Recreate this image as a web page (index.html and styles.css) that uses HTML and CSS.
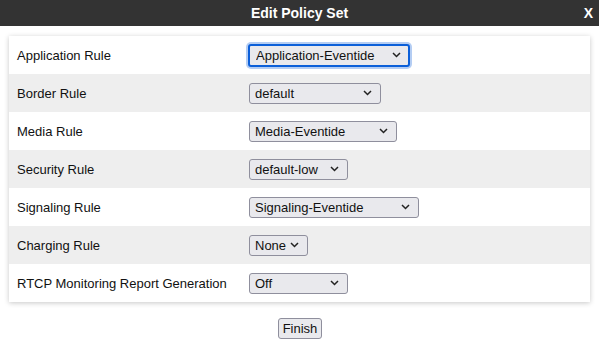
FILE: index.html
```html
<!DOCTYPE html>
<html>
<head>
<meta charset="utf-8">
<link rel="stylesheet" href="styles.css">
</head>
<body>
<div class="titlebar">
  <span class="title">Edit Policy Set</span>
  <span class="close">X</span>
</div>
<div class="card">
  <div class="row">
    <span class="label">Application Rule</span>
    <select class="sel sel-app focused"><option>Application-Eventide</option></select>
  </div>
  <div class="row alt">
    <span class="label">Border Rule</span>
    <select class="sel sel-border"><option>default</option></select>
  </div>
  <div class="row">
    <span class="label">Media Rule</span>
    <select class="sel sel-media"><option>Media-Eventide</option></select>
  </div>
  <div class="row alt">
    <span class="label">Security Rule</span>
    <select class="sel sel-sec"><option>default-low</option></select>
  </div>
  <div class="row">
    <span class="label">Signaling Rule</span>
    <select class="sel sel-sig"><option>Signaling-Eventide</option></select>
  </div>
  <div class="row alt">
    <span class="label">Charging Rule</span>
    <select class="sel sel-charge"><option>None</option></select>
  </div>
  <div class="row">
    <span class="label">RTCP Monitoring Report Generation</span>
    <select class="sel sel-rtcp"><option>Off</option></select>
  </div>
</div>
<div class="actions">
  <button class="btn">Finish</button>
</div>
</body>
</html>
```
FILE: styles.css
```css
html, body {
  margin: 0;
  padding: 0;
  background: #ffffff;
  font-family: "Liberation Sans", Arial, sans-serif;
  font-size: 13px;
  color: #111;
}
.titlebar {
  height: 26px;
  background: #333333;
  color: #ffffff;
  display: flex;
  align-items: center;
  justify-content: center;
  position: relative;
  font-family: "Liberation Sans Narrow", "Liberation Sans", Arial, sans-serif;
  font-weight: bold;
  font-size: 14px;
}
.close {
  position: absolute;
  right: 6px;
  top: 5px;
  font-size: 14px;
}
.card {
  margin: 10px 9px 0 9px;
  background: #fff;
  box-shadow: 0 1px 5px rgba(0,0,0,0.22);
}
.row {
  height: 38px;
  display: grid;
  grid-template-columns: 240px 1fr;
  align-items: center;
}
.row.alt {
  background: #eeeeee;
}
.label {
  padding-left: 8px;
}
.sel {
  -webkit-appearance: none;
  appearance: none;
  height: 21px;
  box-sizing: border-box;
  border: 1px solid #8f8f9d;
  border-radius: 3px;
  background-color: #e9e9ed;
  background-image: url("data:image/svg+xml;utf8,<svg xmlns='http://www.w3.org/2000/svg' width='9' height='6' viewBox='0 0 9 6'><path d='M1 1 L4.5 4.5 L8 1' fill='none' stroke='%23222' stroke-width='1.5'/></svg>");
  background-repeat: no-repeat;
  background-position: right 8px center;
  font-family: "Liberation Sans", Arial, sans-serif;
  font-size: 13px;
  color: #111;
  padding: 0 0 0 5px;
  margin: 0;
  outline: none;
}
.sel.focused {
  border: 2px solid #0b5fd9;
  box-shadow: 0 0 0 2px #b4cdf3;
  padding-left: 6px;
  height: 23px;
  background-position: right 7px center;
}
.sel-app { width: 162px; margin-left: -1px; }
.sel-border { width: 132px; }
.sel-media { width: 148px; }
.sel-sec { width: 99px; }
.sel-sig { width: 170px; }
.sel-charge { width: 59px; }
.sel-rtcp { width: 99px; }
.actions {
  display: flex;
  justify-content: center;
  padding-top: 16px;
}
.btn {
  height: 21px;
  padding: 0 4px;
  border: 1px solid #8f8f9d;
  border-radius: 3px;
  background: #e9e9ed;
  font-family: "Liberation Sans", Arial, sans-serif;
  font-size: 13px;
  color: #111;
  margin-left: 1px;
}
```
